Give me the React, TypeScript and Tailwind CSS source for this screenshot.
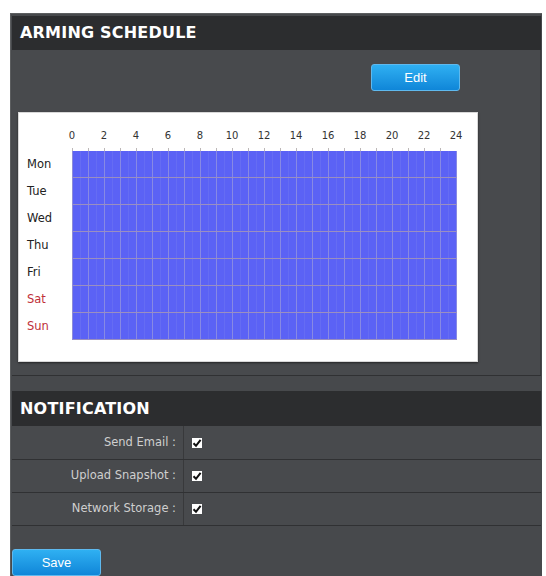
import React from "react";

const hours = [0, 2, 4, 6, 8, 10, 12, 14, 16, 18, 20, 22, 24];
const days = [
    { name: "Mon", weekend: false },
    { name: "Tue", weekend: false },
    { name: "Wed", weekend: false },
    { name: "Thu", weekend: false },
    { name: "Fri", weekend: false },
    { name: "Sat", weekend: true },
    { name: "Sun", weekend: true },
];
const slots = Array.from({ length: 24 }, (_, i) => i);
const notifications = ["Send Email :", "Upload Snapshot :", "Network Storage :"];

const CheckBox = () => (
    <span className="flex h-[10px] w-[10px] items-center justify-center bg-white">
        <svg viewBox="0 0 10 10" className="h-[10px] w-[10px]">
            <path d="M1.5 5.2 L4 7.8 L8.6 1.8" fill="none" stroke="#111" strokeWidth="2" />
        </svg>
    </span>
);

const BlueButton = ({ label }: { label: string }) => (
    <button className="h-[27px] w-[89px] rounded-[3px] border border-[#5fb9ee] bg-gradient-to-b from-[#2fb0f2] to-[#0f86d8] text-[13px] text-white font-['Liberation_Sans',sans-serif]">
        {label}
    </button>
);

const ScheduleGrid = () => (
    <div className="ml-[6px] flex h-[250px] w-[460px] border border-[#d8d8d8] bg-white shadow-[0_1px_2px_rgba(0,0,0,0.5)]">
        <div className="w-[53px] pt-[38px]">
            {days.map((d) => (
                <div
                    key={d.name}
                    className={`flex h-[27px] items-center pl-[8px] text-[11.5px] ${d.weekend ? "text-[#c0303a]" : "text-[#222]"}`}
                >
                    {d.name}
                </div>
            ))}
        </div>
        <div className="flex flex-col">
            <div className="ml-[-16px] flex h-[35px] pt-[16px] text-[10px] leading-[14px] text-[#333]">
                {hours.map((h) => (
                    <span key={h} className="w-[32px] text-center">
                        {h}
                    </span>
                ))}
            </div>
            <div className="flex h-[3px] w-[385px]">
                {slots.map((s) => (
                    <div key={s} className="h-[3px] w-[16px] border-l border-[#bdb8b8]" />
                ))}
            </div>
            <div className="flex w-[385px] flex-col border-l border-[#8e8cd8] bg-[#5b62f5]">
                {days.map((d) => (
                    <div key={d.name} className="flex h-[27px] border-b border-[#9a8fc0]">
                        {slots.map((s) => (
                            <div key={s} className="flex w-[16px] border-r border-[#8789e4]">
                                <div className="w-[8px] border-r border-[#656cf3]" />
                            </div>
                        ))}
                    </div>
                ))}
            </div>
        </div>
    </div>
);

export default function App() {
    return (
        <div className="min-h-screen bg-white pl-[10px] pt-[13px] font-['DejaVu_Sans',sans-serif]">
            <div className="flex min-h-[563px] w-[532px] flex-col border-l border-t border-[#5c5e60] bg-[#47494c] px-[1px] pt-[2px]">
                {/* Arming schedule */}
                <div className="border-b border-[#303133]">
                    <div className="flex h-[34px] items-center bg-[#2c2d2f] px-[8px] text-[16px] font-bold tracking-[0.2px] text-white">
                        ARMING SCHEDULE
                    </div>
                    <div className="h-[325px] border-r border-[#3a3b3d] bg-[#484a4d] pt-[14px]">
                        <div className="flex justify-end pr-[80px]">
                            <BlueButton label="Edit" />
                        </div>
                        <div className="pt-[21px]">
                            <ScheduleGrid />
                        </div>
                    </div>
                </div>

                {/* Notification */}
                <div className="mt-[15px] border-b border-[#303133]">
                    <div className="flex h-[35px] items-center bg-[#2c2d2f] px-[8px] text-[16px] font-bold tracking-[0.2px] text-white">
                        NOTIFICATION
                    </div>
                    {notifications.map((n, i) => (
                        <div
                            key={n}
                            className={`flex h-[33px] items-center bg-[#484a4d] ${i > 0 ? "border-t border-[#303133]" : ""}`}
                        >
                            <div className="flex h-full w-[172px] items-center justify-end border-r border-[#38393b] pr-[7px] text-[11.5px] text-[#cfcfcf]">
                                {n}
                            </div>
                            <div className="pl-[8px]">
                                <CheckBox />
                            </div>
                        </div>
                    ))}
                </div>

                <div className="pt-[23px]">
                    <BlueButton label="Save" />
                </div>
            </div>
        </div>
    );
}
